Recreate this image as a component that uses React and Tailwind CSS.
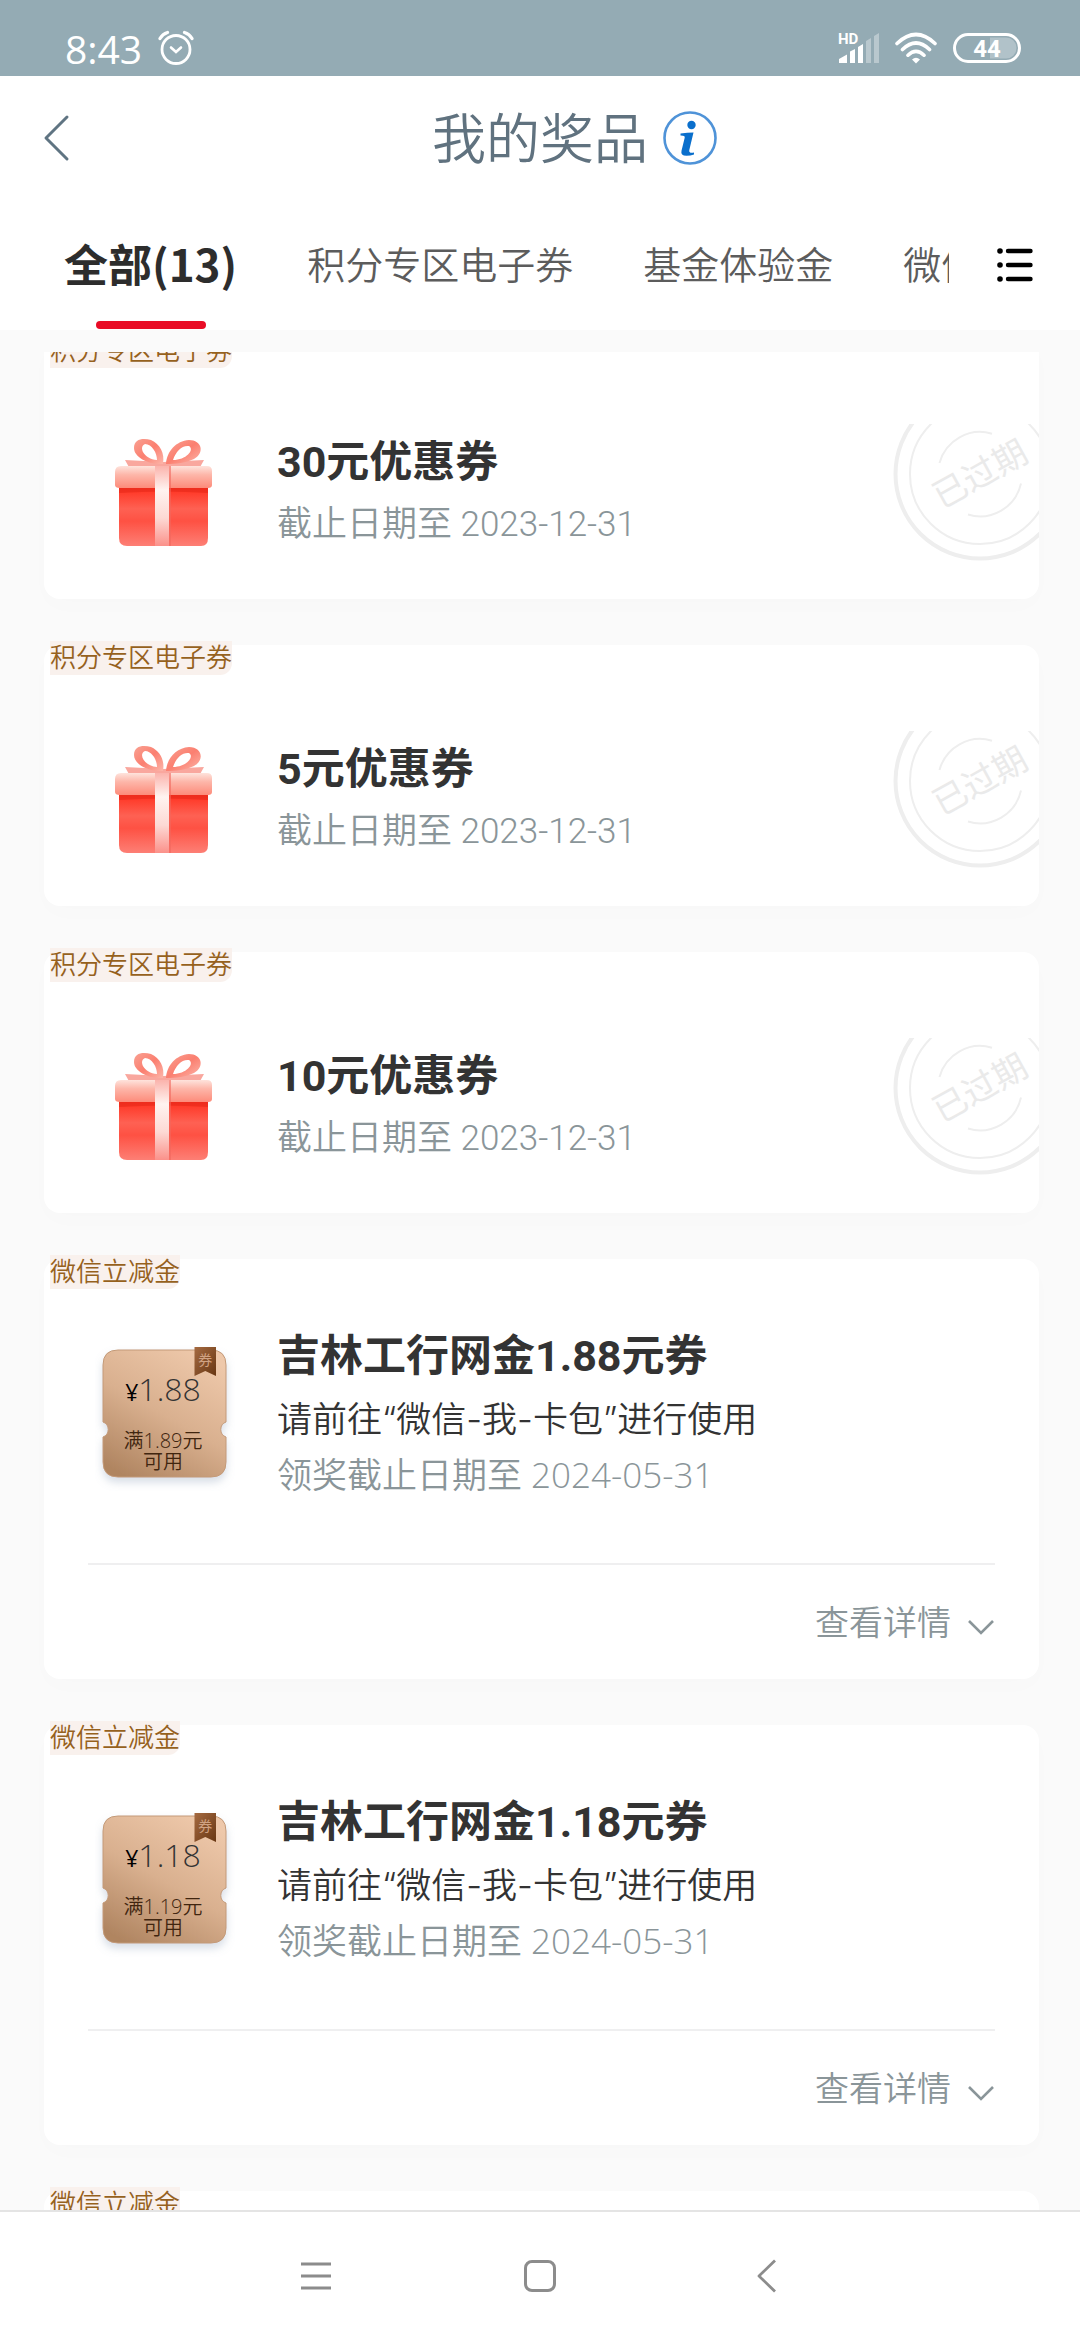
import React from "react";

const vouchers = [
  { tag: "积分专区电子券", title: "30元优惠券", until: "截止日期至 2023-12-31" },
  { tag: "积分专区电子券", title: "5元优惠券", until: "截止日期至 2023-12-31" },
  { tag: "积分专区电子券", title: "10元优惠券", until: "截止日期至 2023-12-31" },
];

const coupons = [
  { tag: "微信立减金", title: "吉林工行网金1.88元券", amount: "1.88", min: "1.89", until: "领奖截止日期至 2024-05-31" },
  { tag: "微信立减金", title: "吉林工行网金1.18元券", amount: "1.18", min: "1.19", until: "领奖截止日期至 2024-05-31" },
];

function StatusBar() {
  return (
    <div className="flex h-[76px] shrink-0 items-center bg-[#94abb4] pt-5 pr-[58px] pl-[65px] text-white">
      <span className="font-['Open_Sans','Noto_Sans_CJK_SC',sans-serif] text-[39px] leading-none font-normal">8:43</span>
      <svg className="ml-4 h-9 w-9" viewBox="0 0 36 36" fill="none" stroke="currentColor" strokeLinecap="round">
        <circle cx="18" cy="19.5" r="14" strokeWidth="2.8" />
        <path d="M13 17.500l5 4.500l5-4.500" strokeWidth="2.600" />
        <path d="M2 8.500Q4.500 4 9.500 2.500M34 8.500Q31.500 4 26.500 2.500" strokeWidth="3.200" />
      </svg>
      <svg className="ml-auto h-8 w-11" viewBox="0 0 44 32" fill="currentColor">
        <text x="0" y="12" fontSize="15" fontWeight="700" fontFamily="Roboto, sans-serif">HD</text>
        <path d="M1 31v-4l8-4.500v8.500zM12 19.500l5-2.500v14h-5zM20 15l5-3v19h-5z" />
        <path opacity=".35" d="M28 9l5-3v25h-5zM36 4l5-3v30h-5z" />
      </svg>
      <svg className="ml-3 h-8 w-11" viewBox="0 0 44 32" fill="none" stroke="currentColor" strokeLinecap="round" strokeWidth="3.600">
        <path d="M3 11.500Q22-6.500 41 11.500M8.500 17.500Q22 4.500 35.500 17.500M14 23.200Q22 15.500 30 23.200" />
        <path d="M22 31.500l-4-4q4-3.500 8 0z" fill="currentColor" stroke="none" />
      </svg>
      <svg className="ml-3.5 h-8 w-[70px]" viewBox="0 0 70 32">
        <path d="M38 5.500h16a10.500 10.500 0 0 1 0 21H38z" fill="#fff" opacity=".28" />
        <rect x="2.500" y="2.500" width="65" height="27" rx="13.500" fill="none" stroke="#fff" strokeWidth="3" />
        <text x="35" y="24.500" textAnchor="middle" fontSize="24" fontWeight="700" fontFamily="Roboto, sans-serif" fill="#fff">44</text>
      </svg>
    </div>
  );
}

function TitleBar() {
  return (
    <header className="grid h-[124px] shrink-0 grid-cols-[1fr_auto_1fr] items-center bg-white px-10">
      <button aria-label="返回" className="flex h-16 w-16 items-center text-[#5f7482]">
        <svg className="h-12 w-8" viewBox="0 0 32 48" fill="none" stroke="currentColor" strokeWidth="3" strokeLinecap="round" strokeLinejoin="round">
          <path d="M27 3L6 24l21 21" />
        </svg>
      </button>
      <h1 className="pb-1 text-[54px] leading-none font-[350] text-[#60727f]">我的奖品</h1>
      <button aria-label="说明" className="ml-3.5 w-14">
        <svg className="h-14 w-14" viewBox="0 0 56 56">
          <circle cx="28" cy="28" r="25.500" fill="none" stroke="#4f93d8" strokeWidth="2.600" />
          <circle cx="29.500" cy="15" r="4.200" fill="#0a6fcc" />
          <path d="M18.500 23.500q7-.8 13-1l-4.200 17.500q-.9 3.600 4.700 2.600v1.900q-3.500 1.300-7.500 1.300q-6.200 0-5-5l3.200-13q.6-2.400-4.200-2.300z" fill="#0a6fcc" />
        </svg>
      </button>
    </header>
  );
}

function Tabs() {
  return (
    <nav className="flex h-[130px] shrink-0 items-stretch bg-white">
      <div className="flex min-w-0 flex-1 gap-[70px] overflow-hidden pl-16 text-[38px] font-[350] whitespace-nowrap text-[#5c5c5c]">
        <button className="relative flex items-center pb-1 text-[44px] font-bold text-[#2d2d2d]">
          全部(13)
          <span className="absolute bottom-px left-1/2 h-2 w-[110px] -translate-x-1/2 rounded-full bg-[#e90c26]" />
        </button>
        <button className="pb-1.5">积分专区电子券</button>
        <button className="pb-1.5">基金体验金</button>
        <button className="pb-1.5">微信立减金</button>
      </div>
      <button aria-label="全部分类" className="flex w-[131px] shrink-0 items-center justify-center">
        <svg className="h-9 w-9" viewBox="0 0 36 36" stroke="#000" strokeLinecap="round" fill="#000">
          <path d="M11 4h22.500M11 18h22.500M11 32h22.500" strokeWidth="4.400" />
          <path d="M3 4h.01M3 18h.01M3 32h.01" strokeWidth="5.600" />
        </svg>
      </button>
    </nav>
  );
}

function Gift() {
  return (
    <svg className="h-[120px] w-[108px] shrink-0" viewBox="0 0 108 120">
      <defs>
        <linearGradient id="giftBox" x1="0" y1="0" x2="0" y2="1">
          <stop offset="0" stopColor="#f32d1c" />
          <stop offset=".12" stopColor="#ff3a29" />
          <stop offset=".4" stopColor="#fe6153" />
          <stop offset=".6" stopColor="#fe5143" />
          <stop offset="1" stopColor="#fd7f75" />
        </linearGradient>
        <linearGradient id="giftLid" x1="0" y1="0" x2="0" y2="1">
          <stop offset="0" stopColor="#fee3dc" />
          <stop offset=".4" stopColor="#fdb6a9" />
          <stop offset="1" stopColor="#fd8b7a" />
        </linearGradient>
        <linearGradient id="giftBand" x1="0" y1="0" x2="0" y2="1">
          <stop offset="0" stopColor="#fbb3ac" />
          <stop offset=".3" stopColor="#fff3f0" />
          <stop offset=".65" stopColor="#fdd9d4" />
          <stop offset="1" stopColor="#fb918a" />
        </linearGradient>
        <linearGradient id="giftBow" x1="0" y1="0" x2="1" y2="1">
          <stop offset="0" stopColor="#f9a192" />
          <stop offset=".5" stopColor="#fb7f70" />
          <stop offset="1" stopColor="#fcb6aa" />
        </linearGradient>
      </defs>
      <path d="M15 26l38 2l41-2l-5 9H20z" fill="#f9a79e" />
      <path fillRule="evenodd" fill="url(#giftBow)" d="M53 30C38 31 24 23 24 14C24 4 34 4 41 6C50 10 55 19 53 30zM47 26C47 19 42 10 35 10C28 13 34 25 47 26z" />
      <path fillRule="evenodd" fill="url(#giftBow)" d="M56 30C57 17 66 7 79 6C92 6 95 19 84 25C76 29 66 30 56 30zM63 26C66 17 72 11 79 12C85 16 76 26 63 26z" />
      <path d="M9 50h89v54q0 8-7 8H17q-8 0-8-8z" fill="url(#giftBox)" />
      <path d="M9 53h89v6q-44-3-89 0z" fill="#e42718" opacity=".55" />
      <path d="M11 32h86q5 0 5 5v14q0 3-4 3H10q-5 0-5-3V38q0-6 6-6z" fill="url(#giftLid)" />
      <path d="M45 32h14v80H45z" fill="url(#giftBand)" />
      <path d="M59 32h2v80h-2z" fill="#f2685e" opacity=".6" />
    </svg>
  );
}

function ExpiredStamp() {
  return (
    <svg className="absolute top-[86px] right-0 h-[138px] w-[146px]" viewBox="0 0 146 138" fill="none" stroke="#eeeeee" role="img" aria-label="已过期">
      <circle cx="87" cy="50" r="84.500" strokeWidth="4" />
      <circle cx="87" cy="50" r="70" strokeWidth="2" />
      <path d="M46.500 39A42 42 0 0 1 99 9.700M128 59.500A42 42 0 0 1 75 90.500" strokeWidth="2" />
      <text x="87" y="62" transform="rotate(-29 87 50)" textAnchor="middle" fontSize="34" fontFamily="'Noto Sans CJK SC', sans-serif" fill="#eaeaea" stroke="none">已过期</text>
    </svg>
  );
}

function Tag({ children }) {
  return (
    <span className="absolute -top-1 left-1.5 rounded-br-xl bg-[#f9f1ed] pb-1 text-[26px] leading-[30px] font-[350] text-[#96611d]">
      {children}
    </span>
  );
}

function VoucherCard({ item }) {
  return (
    <article className="relative flex h-[261px] shrink-0 items-start rounded-2xl bg-white pt-24 pl-[66px] shadow-[0_8px_24px_rgba(0,0,0,0.01)]">
      <Tag>{item.tag}</Tag>
      <Gift />
      <div className="ml-[59px] font-[Roboto,'Noto_Sans_CJK_SC',sans-serif]">
        <h2 className="text-[43px] leading-[56px] font-bold text-[#333]">{item.title}</h2>
        <p className="mt-2.5 text-[35px] leading-[50px] font-[350] text-[#8a9599]">{item.until}</p>
      </div>
      <ExpiredStamp />
    </article>
  );
}

function CouponPicture({ amount, min }) {
  return (
    <div className="relative h-[146px] w-[140px] shrink-0">
      <svg className="absolute inset-0 h-full w-full" viewBox="0 0 140 146">
        <defs>
          <linearGradient id="bronze" x1=".75" y1="0" x2=".2" y2="1">
            <stop offset="0" stopColor="#eec8aa" />
            <stop offset=".5" stopColor="#d9b08f" />
            <stop offset="1" stopColor="#b08561" />
          </linearGradient>
          <linearGradient id="ribbon" x1="0" y1="0" x2="1" y2="1">
            <stop offset="0" stopColor="#a56a41" />
            <stop offset="1" stopColor="#683713" />
          </linearGradient>
          <filter id="couponShadow" x="-20%" y="-20%" width="140%" height="140%">
            <feDropShadow dx="0" dy="5" stdDeviation="4" floodColor="#8fa0b8" floodOpacity=".35" />
          </filter>
        </defs>
        <path filter="url(#couponShadow)" fill="url(#bronze)" stroke="#c39a78" d="M23 5h93q15 0 15 15v57a8 8 0 0 0 0 15v25q0 15-15 15H23q-15 0-15-15V92a8 8 0 0 0 0-15V20q0-15 15-15z" />
        <path d="M99.500 2h21.500v29l-10.700-5l-10.800 5z" fill="url(#ribbon)" />
        <text x="110.300" y="20" textAnchor="middle" fontSize="14" fontFamily="'Noto Sans CJK SC', sans-serif" fill="#d0a283">券</text>
      </svg>
      <div className="relative flex h-full flex-col items-center pt-6 pr-1 font-['Open_Sans','Noto_Sans_CJK_SC',sans-serif] font-[350] text-[#333]">
        <p className="text-[32px] leading-[40px] whitespace-nowrap">
          <span className="text-[23px] font-normal text-black">¥</span>
          {amount}
        </p>
        <p className="mt-[18px] text-center text-[20px] leading-[21px] text-[#40250f]">
          满{min}元<br />可用
        </p>
      </div>
    </div>
  );
}

function CouponCard({ item }) {
  return (
    <article className="relative flex h-[420px] shrink-0 flex-col rounded-2xl bg-white px-11 shadow-[0_8px_24px_rgba(0,0,0,0.01)]">
      <Tag>{item.tag}</Tag>
      <div className="flex h-[306px] items-start border-b-2 border-[#efeff0] pl-[7px]">
        <div className="pt-[86px]">
          <CouponPicture amount={item.amount} min={item.min} />
        </div>
        <div className="ml-[42px] pt-[69px]">
          <h2 className="font-[Roboto,'Noto_Sans_CJK_SC',sans-serif] text-[43px] leading-[56px] font-bold text-[#333]">{item.title}</h2>
          <p className="mt-[7px] font-[Inter,'Noto_Sans_CJK_SC',sans-serif] text-[35px] leading-[56px] font-[350] text-[#333]">请前往“微信-我-卡包”进行使用</p>
          <p className="font-['Open_Sans','Noto_Sans_CJK_SC',sans-serif] text-[35px] leading-[56px] font-[350] text-[#8a9599]">{item.until}</p>
        </div>
      </div>
      <button className="flex flex-1 items-center self-end pb-1 text-[34px] font-[350] text-[#8a9599]">
        查看详情
        <svg className="mt-3.5 ml-4 h-5 w-7" viewBox="0 0 28 20" fill="none" stroke="currentColor" strokeWidth="2.600">
          <path d="M2 4l12 12l12-12" />
        </svg>
      </button>
    </article>
  );
}

function SystemNav() {
  return (
    <div className="flex h-[130px] shrink-0 justify-center border-t-2 border-[#e4e4e4] bg-white">
      <button aria-label="菜单" className="flex w-56 items-center justify-center">
        <svg className="h-9 w-9" viewBox="0 0 36 36" stroke="#8c8c8c" strokeWidth="3">
          <path d="M3 6h30M3 18h30M3 30h30" />
        </svg>
      </button>
      <button aria-label="主页" className="flex w-56 items-center justify-center">
        <svg className="h-9 w-9" viewBox="0 0 36 36" fill="none" stroke="#8c8c8c" strokeWidth="3">
          <rect x="3.500" y="3.500" width="29" height="29" rx="6.500" />
        </svg>
      </button>
      <button aria-label="后退" className="flex w-56 items-center justify-center">
        <svg className="h-9 w-9" viewBox="0 0 36 36" fill="none" stroke="#8c8c8c" strokeWidth="2.800" strokeLinejoin="round">
          <path d="M29 2.500L13 18l16 15.500" />
        </svg>
      </button>
    </div>
  );
}

export default function App() {
  return (
    <div className="flex h-screen flex-col bg-[#fafafa] font-['Noto_Sans_CJK_SC',sans-serif]">
      <StatusBar />
      <TitleBar />
      <Tabs />
      <main className="mt-[22px] min-h-0 flex-1 overflow-hidden">
        <div className="-mt-3.5 flex flex-col gap-[46px] pr-[41px] pl-11">
          {vouchers.map((item) => (
            <VoucherCard key={item.title} item={item} />
          ))}
          {coupons.map((item) => (
            <CouponCard key={item.title} item={item} />
          ))}
          <article className="relative h-[420px] shrink-0 rounded-2xl bg-white">
            <Tag>微信立减金</Tag>
          </article>
        </div>
      </main>
      <SystemNav />
    </div>
  );
}
